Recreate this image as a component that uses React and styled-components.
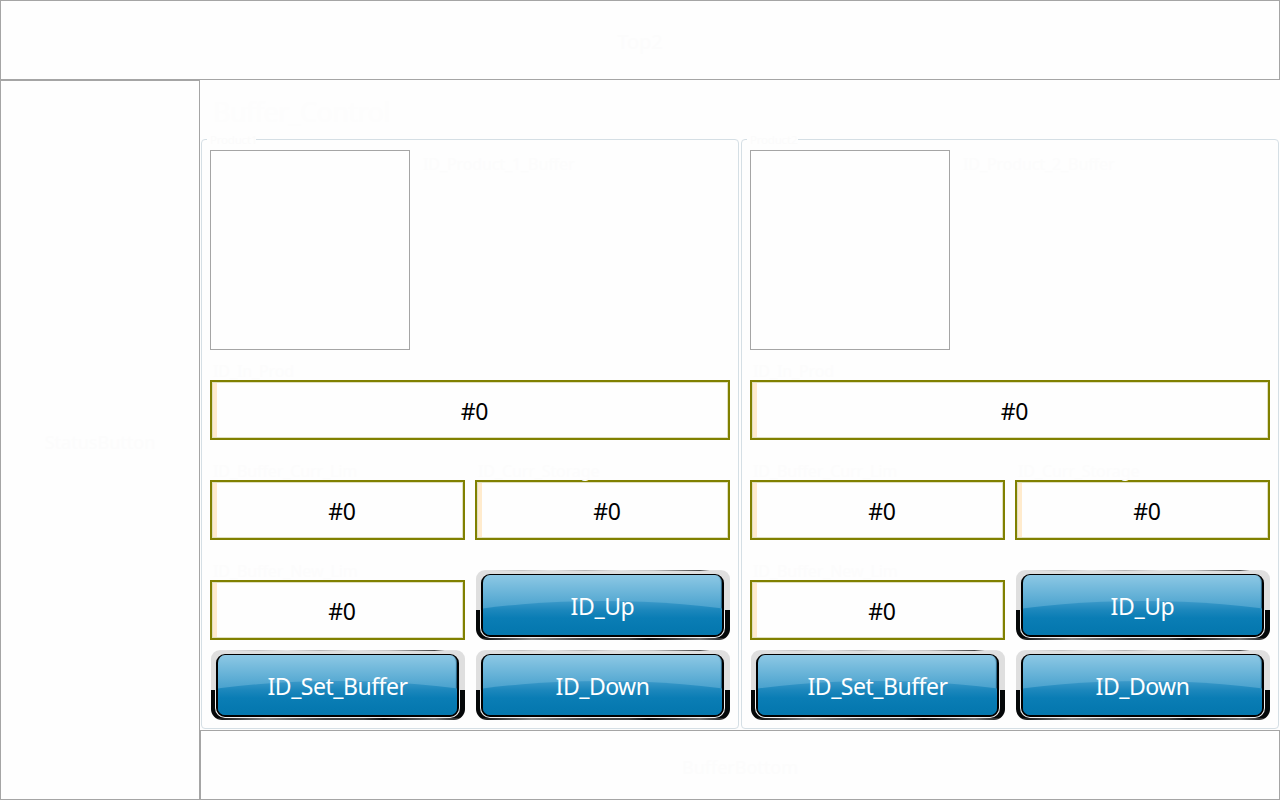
import React from 'react';
import styled, { createGlobalStyle } from 'styled-components';

const GlobalStyle = createGlobalStyle`
  * { box-sizing: border-box; }
  body {
    margin: 0;
    background: #fefefe;
    font-family: "Noto Sans", "Open Sans", sans-serif;
  }
`;

const faint = '#fcfcfc';

const Screen = styled.div`
  display: grid;
  width: 1280px;
  height: 800px;
  grid-template-columns: 200px 1080px;
  grid-template-rows: 80px 650px 70px;
  grid-template-areas: 'top top' 'side main' 'side bottom';
  overflow: hidden;
`;

const Region = styled.section`
  grid-area: ${(p) => p.$area};
  display: flex;
  align-items: center;
  justify-content: center;
  border: 1px solid #a5a5a5;
  padding-top: 3px;
  color: ${faint};
  font-size: ${(p) => p.$size || 20}px;
  line-height: 1;
`;

const Main = styled.main`
  grid-area: main;
  display: flex;
  flex-direction: column;
  padding-left: 1px;
`;

const Title = styled.h1`
  height: 59px;
  margin: 0;
  padding-left: 12px;
  color: #fdfdfd;
  font-size: 27px;
  font-weight: 400;
  line-height: 64px;
  letter-spacing: -0.6px;
`;

const Groups = styled.div`
  display: flex;
  gap: 2px;
`;

const Group = styled.section`
  position: relative;
  width: 538px;
  height: 590px;
  padding: 10px 8px 8px;
  border: 1px solid #d5dfe5;
  border-radius: 4px;
`;

const Legend = styled.span`
  position: absolute;
  top: -7px;
  left: 5px;
  width: ${(p) => p.$width}px;
  padding-left: 3px;
  background: #fefefe;
  color: #fbfbfb;
  font-size: 11.5px;
  line-height: 14px;
  letter-spacing: -0.2px;
`;

const Overview = styled.div`
  display: flex;
  gap: 13px;
  height: 200px;
`;

const Picture = styled.div`
  width: 200px;
  height: 200px;
  border: 1px solid #a5a5a5;
`;

const Label = styled.div`
  position: relative;
  z-index: 1;
  height: ${(p) => p.$height || 30}px;
  padding: ${(p) => (p.$height || 30) - 20}px 0 0 3px;
  color: ${faint};
  font-size: 16px;
  line-height: 22px;
  letter-spacing: -0.1px;
  white-space: nowrap;
`;

const ProductName = styled(Label)`
  padding: 3px 0 0;
  height: 30px;
`;

const Columns = styled.div`
  display: grid;
  grid-template-columns: 255px 255px;
  column-gap: 10px;
`;

const ButtonCell = styled.div`
  padding-top: ${(p) => p.$top}px;
`;

const FieldBox = styled.div`
  display: flex;
  align-items: center;
  justify-content: center;
  height: 60px;
  padding: 3px 0 0 9px;
  border: 2px solid #808000;
  box-shadow: inset 0 0 0 1px #dfdfbf, inset 5px 0 #ffebcd;
  color: #000;
  font-size: 23px;
  line-height: 1;
  letter-spacing: -0.3px;
`;

const Bezel = styled.button`
  display: block;
  width: 254px;
  height: 70px;
  margin: 0 0 0 1px;
  padding: 3px 5px 2px 4px;
  border: 0;
  border-radius: 9px 9px 11px 11px;
  font-family: inherit;
  background:
    linear-gradient(90deg, #e2e2e2 6%, #c4c4c4 18%, #e4e4e4 30%, #b4b4b4 43%, #e4e4e4 57%, #c4c4c4 70%, #444 88%, #e2e2e2 92%) 0 0 / 100% 1px no-repeat,
    linear-gradient(90deg, #222 5%, #888 22%, #444 45%, #444 60%, #111 68%, #777 88%, #333 96%) 0 100% / 100% 2px no-repeat,
    linear-gradient(#dfdfdf 0 40px, #050809 40px 100%);
`;

const Rim = styled.span`
  display: block;
  height: 65px;
  padding: 1px;
  border-radius: 10px;
  background: linear-gradient(#dedede 0 36px, #f2f2f2 38px 100%);
`;

const Face = styled.span`
  position: relative;
  display: flex;
  align-items: center;
  justify-content: center;
  height: 63px;
  padding: 3px 0 0;
  overflow: hidden;
  border: 2px solid #000;
  border-top-width: 1px;
  border-radius: 9px;
  background: linear-gradient(#8dc8e4 0, #6bb5d9 17px, #4aa2ce 33px, #2489bf 40px, #0679b0 50px);
  box-shadow: inset -1px -1px 1px rgba(0, 50, 80, 0.65);

  &::before {
    content: '';
    position: absolute;
    top: 26px;
    left: -90px;
    right: -90px;
    height: 84px;
    border-radius: 50%;
    background: linear-gradient(#3c99c9 0, #1c87bc 9px, #0a7db5 17px, #0578af 30px);
  }
`;

const Caption = styled.span`
  position: relative;
  color: #fff;
  font-size: 23px;
  line-height: 1;
  letter-spacing: ${(p) => p.$tracking || 0}px;
  white-space: nowrap;
`;

function Field() {
  return <FieldBox>#0</FieldBox>;
}

function GlossyButton({ children, tracking }) {
  return (
    <Bezel type="button">
      <Rim>
        <Face>
          <Caption $tracking={tracking}>{children}</Caption>
        </Face>
      </Rim>
    </Bezel>
  );
}

function ProductGroup({ number, legendWidth }) {
  return (
    <Group>
      <Legend $width={legendWidth}>Product{number}</Legend>
      <Overview>
        <Picture />
        <ProductName>ID_Product_{number}_Buffer</ProductName>
      </Overview>
      <Label>ID_In_Prod</Label>
      <Field />
      <Columns>
        <div>
          <Label $height={40}>ID_Buffer_Curr_Lim</Label>
          <Field />
          <Label $height={40}>ID_Buffer_New_Lim</Label>
          <Field />
        </div>
        <div>
          <Label $height={40}>ID_Curr_Storage</Label>
          <Field />
          <ButtonCell $top={30}>
            <GlossyButton tracking={-0.4}>ID_Up</GlossyButton>
          </ButtonCell>
        </div>
        <ButtonCell $top={10}>
          <GlossyButton tracking={-0.5}>ID_Set_Buffer</GlossyButton>
        </ButtonCell>
        <ButtonCell $top={10}>
          <GlossyButton tracking={-0.5}>ID_Down</GlossyButton>
        </ButtonCell>
      </Columns>
    </Group>
  );
}

export default function App() {
  return (
    <>
      <GlobalStyle />
      <Screen>
        <Region $area="top">Top2</Region>
        <Region $area="side" $size={18}>StatusButton</Region>
        <Main>
          <Title>Buffer_Control</Title>
          <Groups>
            <ProductGroup number={1} legendWidth={49} />
            <ProductGroup number={2} legendWidth={51} />
          </Groups>
        </Main>
        <Region $area="bottom" $size={18}>BufferBottom</Region>
      </Screen>
    </>
  );
}
